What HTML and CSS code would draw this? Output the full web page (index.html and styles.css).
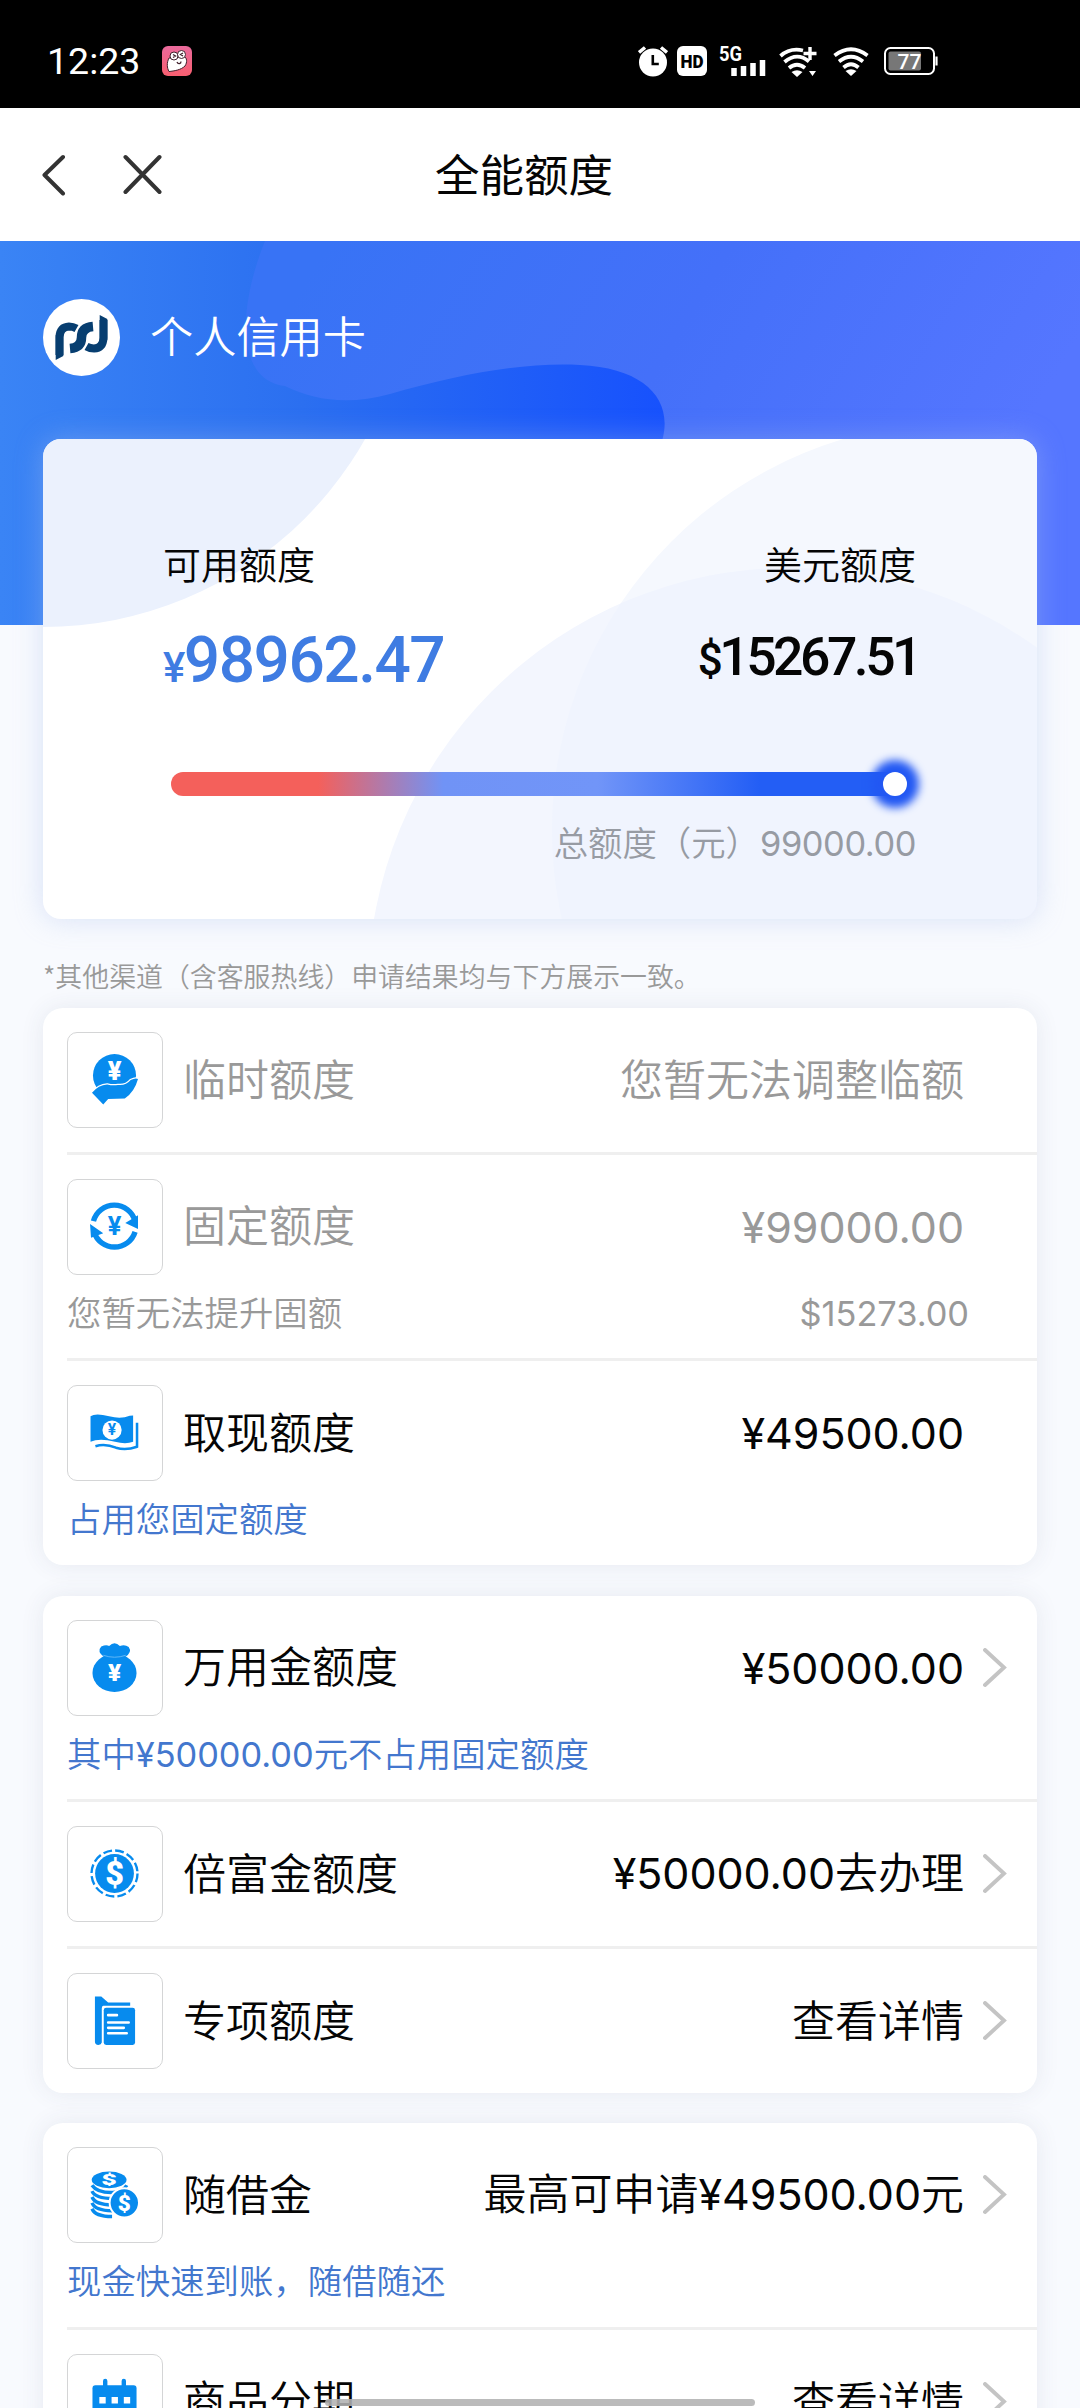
FILE: index.html
```html
<!DOCTYPE html>
<html lang="zh-CN">
<head>
<meta charset="utf-8">
<title>全能额度</title>
<link rel="stylesheet" href="styles.css">
</head>
<body>
<div class="screen">
  <div class="statusbar">
    <span class="clock">12:23</span>
    <svg class="app" width="30" height="30" viewBox="0 0 30 30"><defs><linearGradient id="pink" x1="0" y1="0" x2="0" y2="1"><stop offset="0" stop-color="#ea6a9c"/><stop offset="1" stop-color="#f85f70"/></linearGradient></defs><rect width="30" height="30" rx="6" fill="url(#pink)"/><path d="M7 12C4.500 17 5 22 7 25.500C12 25 19 24 23 20C25.500 16 25 12 22 10Z" fill="#fff" stroke="#40202c" stroke-width="1"/><circle cx="12" cy="10" r="4" fill="#fff" stroke="#40202c"/><circle cx="19.500" cy="8.500" r="4" fill="#fff" stroke="#40202c"/><path d="M11 8.500l2.500 1.500-2.500 1.500M21 7l-2.500 1.500 2.500 1.500M15 16c1 2.500 4 2 4-.5" fill="none" stroke="#40202c" stroke-width="1.300"/></svg>
    <div class="status-icons">
      <svg width="30" height="32" viewBox="0 0 30 32"><circle cx="15" cy="17.500" r="14" fill="#fff"/><path d="M1 7.500l6-5M29 7.500l-6-5" stroke="#fff" stroke-width="3.500"/><path d="M14.800 10v9h6" fill="none" stroke="#000" stroke-width="2.600"/></svg>
      <svg class="hd" width="30" height="30" viewBox="0 0 30 30"><rect width="30" height="30" rx="6" fill="#fff"/><text x="15" y="22" text-anchor="middle" textLength="23" lengthAdjust="spacingAndGlyphs" font-size="19" font-weight="900">HD</text></svg>
      <svg class="cell" width="48" height="36" viewBox="0 -4 48 36"><text x="0" y="14.500" font-size="19.500" font-weight="700" fill="#fff" textLength="23" lengthAdjust="spacingAndGlyphs">5G</text><path d="M15 30v-8M24.500 30v-10M34 30v-13M43.500 30v-16" stroke="#fff" stroke-width="5.500"/></svg>
      <svg class="wifi-plus" width="38" height="31" viewBox="0 0 38 31"><g fill="none" stroke="#fff" stroke-width="3.800"><path d="M1.500 10Q11 1.500 24 4.500M5.500 16Q18 5.500 30 15.500M10 22Q18 15.500 26 22"/><path d="M31 1v13M24.500 7.500h13" stroke-width="3.400"/></g><path d="M12.500 26q5.500-3.500 11 0l-5.500 5zM30 25h7l-3.500 5z" fill="#fff"/></svg>
      <svg class="wifi" width="36" height="30" viewBox="0 0 36 30"><path d="M1.500 9.500Q18-3 34.500 9.500M6 15.500Q18 6 30 15.500M10.500 21.500Q18 15 25.500 21.500" fill="none" stroke="#fff" stroke-width="3.800"/><path d="M12.500 25q5.500-3.500 11 0l-5.500 5z" fill="#fff"/></svg>
      <svg class="battery" width="54" height="28" viewBox="0 0 54 28"><rect x="1" y="1" width="49" height="26" rx="5.500" fill="none" stroke="#fff" stroke-width="2"/><rect x="4.500" y="4.500" width="32.500" height="19" rx="2" fill="#777"/><path d="M52.500 9.500v9" stroke="#fff" stroke-width="2.200"/><text x="25.500" y="22" font-size="21" font-weight="500" fill="#fff" text-anchor="middle">77</text></svg>
    </div>
  </div>
  <header class="navbar">
    <svg width="26" height="42" viewBox="0 0 26 42"><path d="M21 3L2.500 21 21 39.500" fill="none" stroke="#333" stroke-width="4" stroke-linecap="round" stroke-linejoin="round"/></svg>
    <svg class="close" width="40" height="42" viewBox="0 0 40 42"><path d="M2.500 3l34 35M36.500 3L2.500 38" fill="none" stroke="#333" stroke-width="4" stroke-linecap="round"/></svg>
    <h1>全能额度</h1>
  </header>
  <main>
    <section class="hero">
      <svg class="hero-art" viewBox="0 0 1080 384" width="1080" height="384"><defs>
        <linearGradient id="base" x1="0" y1="0" x2="1" y2="0"><stop offset="0" stop-color="#3a84f5"/><stop offset=".28" stop-color="#2b6ff0"/><stop offset=".62" stop-color="#1751fd"/></linearGradient>
        <linearGradient id="veil" x1=".1" y1="0" x2="1" y2=".25"><stop offset="0" stop-color="#3873f5"/><stop offset=".5" stop-color="#4470f9"/><stop offset="1" stop-color="#5576ff"/></linearGradient></defs>
        <rect width="1080" height="384" fill="url(#base)"/>
        <path d="M265 0C236 72 238 140 285 145C315 160 350 164 390 153C460 133 525 121 580 124C645 127 674 159 662 200L640 384H1080V0Z" fill="url(#veil)"/>
      </svg>
      <div class="owner">
        <svg width="77" height="77" viewBox="0 0 77 77"><circle cx="38.500" cy="38.500" r="38.500" fill="#fff"/><g fill="none" stroke="#073e70"><path d="M16.500 56V38Q17 28 26 27.500Q30 27.500 33.500 29.500" stroke-width="8"/><path d="M60.500 21V39Q60 49 51 49.500Q47 49.500 43.500 47.500" stroke-width="8"/><path d="M50 27.500Q38.500 28.500 38.500 38.500Q38.500 48.500 27 49.500" stroke-width="9.500"/></g><path d="M12.700 36v25l7.600-4V36zM64.300 41V20l-7.600-4v25z" fill="#073e70"/></svg>
        <span>个人信用卡</span>
      </div>
      <div class="quota-card">
        <svg class="quota-art" viewBox="43 439 994 480" width="994" height="480"><defs><clipPath id="overlap"><circle cx="790" cy="990" r="422"/></clipPath></defs><circle cx="43" cy="257" r="370" fill="#ebf1fd"/><circle cx="960" cy="830" r="408" fill="#f5f8fe"/><circle cx="790" cy="990" r="422" fill="#f3f6fe"/><circle cx="960" cy="830" r="408" fill="#f0f4fe" clip-path="url(#overlap)"/></svg>
        <div class="quota-row">
          <div><p class="label">可用额度</p><p class="cny"><small>¥</small>98962.47</p></div>
          <div class="right"><p class="label">美元额度</p><p class="usd"><small>$</small>15267.51</p></div>
        </div>
        <div class="meter"><i></i></div>
        <p class="total">总额度（元）<span class="n">99000.00</span></p>
      </div>
    </section>
    <p class="notice">*其他渠道（含客服热线）申请结果均与下方展示一致。</p>
    <section class="list">
      <div class="row muted">
        <div class="line"><svg class="icon" viewBox="0 0 96 96"><circle cx="47.500" cy="43.500" r="22"/><path class="cut" d="M24.500 61Q31 53 40 52.500Q46 54 51 53Q59 54 64 48Q69 45.500 71.500 47Q68 60 58 67L41 67.500 36 73Z"/><text x="47.500" y="48" font-size="26">¥</text></svg><span class="name">临时额度</span><span class="value">您暂无法调整临额</span></div>
      </div>
      <div class="row muted sub">
        <div class="line"><svg class="icon" viewBox="0 0 96 96"><g class="ring"><path d="M26 42A22 22 0 0 1 68.500 42"/><path d="M68.500 53A22 22 0 0 1 26.500 53"/></g><path d="M71.500 36V50L58.500 44ZM22.500 45L36 54.500 23.500 59Z"/><text class="solid" x="47.500" y="56" font-size="26">¥</text></svg><span class="name">固定额度</span><span class="value n">¥99000.00</span></div>
        <div class="hint"><span>您暂无法提升固额</span><span class="n usd-limit">$15273.00</span></div>
      </div>
      <div class="row sub last">
        <div class="line"><svg class="icon" viewBox="0 0 96 96"><path d="M23 31Q28 27 42 31Q54 34 63 30.500L66.500 30V57Q59 60 48 57Q32 53 23 57Z"/><path class="thin" d="M28 61.500Q38 58.500 49 63Q59 66 70.500 62V37.500"/><circle class="hole" cx="45" cy="45" r="9.800"/><text class="solid" x="45" y="50.500" font-size="16">¥</text></svg><span class="name">取现额度</span><span class="value n">¥49500.00</span></div>
        <div class="hint blue"><span>占用您固定额度</span></div>
      </div>
    </section>
    <section class="list">
      <div class="row sub">
        <div class="line"><svg class="icon" viewBox="0 0 96 96"><ellipse cx="47.500" cy="53" rx="22.500" ry="19.500"/><path d="M37 37Q29 31 34 26Q39 24 42 25.500Q47.500 20 53 25.500Q58 23.500 62 26.500Q66 32 58 37Z"/><path class="seam" d="M36 35Q47.500 39 59 35"/><text x="47.500" y="61" font-size="25">¥</text></svg><span class="name">万用金额度</span><span class="value n">¥50000.00</span><svg class="go" viewBox="0 0 24 40"><path d="M2 2l19 17.500L2 37"/></svg></div>
        <div class="hint blue"><span>其中<span class="n">¥50000.00</span>元不占用固定额度</span></div>
      </div>
      <div class="row">
        <div class="line"><svg class="icon" viewBox="0 0 96 96"><circle cx="47.500" cy="47.500" r="19.800"/><circle class="dash" cx="47.500" cy="47.500" r="23.500"/><text x="47.500" y="59" font-size="33">$</text></svg><span class="name">倍富金额度</span><span class="value"><span class="n">¥50000.00</span>去办理</span><svg class="go" viewBox="0 0 24 40"><path d="M2 2l19 17.500L2 37"/></svg></div>
      </div>
      <div class="row last">
        <div class="line"><svg class="icon" viewBox="0 0 96 96"><path d="M27.500 23H34L41 29H63.500V32.500H36Q34.500 33 34.500 35V70Q34 72.500 31 72.500Q27.500 72.500 27.500 69Z"/><rect x="36.500" y="34.500" width="32" height="38" rx="2.500"/><path class="text-lines" d="M41 42h9M41 49.500h21M41 55h16M41 60.500h19"/></svg><span class="name">专项额度</span><span class="value">查看详情</span><svg class="go" viewBox="0 0 24 40"><path d="M2 2l19 17.500L2 37"/></svg></div>
      </div>
    </section>
    <section class="list">
      <div class="row sub">
        <div class="line"><svg class="icon" viewBox="0 0 96 96"><g class="discs"><path d="M24.500 62Q28 70 45 70M24.500 56Q28 64 45 64M24.500 50Q28 58 45 58M24.500 44Q28 52 48 51.500M24.500 38Q30 46 46 45.500Q57 44 60 38"/></g><ellipse cx="42" cy="32.500" rx="17.800" ry="8.500"/><circle class="coin" cx="57.500" cy="56" r="15"/><text x="42" y="38" font-size="15" textLength="16" lengthAdjust="spacingAndGlyphs">$</text><text x="57.500" y="64" font-size="23">$</text></svg><span class="name">随借金</span><span class="value">最高可申请<span class="n">¥49500.00</span>元</span><svg class="go" viewBox="0 0 24 40"><path d="M2 2l19 17.500L2 37"/></svg></div>
        <div class="hint blue"><span>现金快速到账，随借随还</span></div>
      </div>
      <div class="row">
        <div class="line"><svg class="icon" viewBox="0 0 96 96"><rect x="25" y="31" width="45" height="42" rx="3"/><path class="hooks" d="M38 26.500v7M57 26.500v7"/><path class="hole" d="M32 43h6.500v6.500H32zM44.500 43H51v6.500h-6.500zM57 43h6.500v6.500H57zM32 56h6.500v6.500H32zM44.500 56H51v6.500h-6.500z"/></svg><span class="name">商品分期</span><span class="value">查看详情</span><svg class="go" viewBox="0 0 24 40"><path d="M2 2l19 17.500L2 37"/></svg></div>
      </div>
    </section>
  </main>
  <div class="home-bar"></div>
</div>
</body>
</html>
```
FILE: styles.css
```css
* { box-sizing: border-box; margin: 0; padding: 0; }
body { background: #f8fafe; font-family: "Noto Sans CJK SC", sans-serif; font-weight: 350; color: #050505; }
svg { display: block; flex: none; }
.screen { position: relative; width: 1080px; height: 2408px; overflow: hidden; background: #f8fafe; }
.n { font-family: Inter, "Noto Sans CJK SC", sans-serif; letter-spacing: -0.001em; font-weight: 400; }

.statusbar { height: 108px; background: #000; color: #fff; display: flex; align-items: center; padding: 14px 0 0 47px; font-family: Roboto, sans-serif; }
.clock { width: 115px; font-size: 37.500px; font-weight: 400; line-height: 44px; }
.status-icons { display: flex; align-items: center; margin-left: 446px; }
.hd { margin-left: 9px; }
.cell { margin: -3px 0 0 12px; }
.wifi-plus { margin-left: 12px; }
.wifi { margin-left: 16px; }
.battery { margin-left: 15px; }

.navbar { height: 133px; background: #fff; display: flex; align-items: center; padding-left: 42px; }
.close { margin-left: 55px; }
.navbar h1 { margin-left: 272px; padding-bottom: 4px; font-size: 44.500px; line-height: 60px; font-weight: 400; }

.hero { position: relative; height: 678px; padding: 58px 43px 0; }
.hero-art { position: absolute; left: 0; top: 0; }
.owner { position: relative; display: flex; align-items: center; gap: 30px; height: 77px; color: #fff; font-size: 43.200px; line-height: 60px; }
.owner span { padding-bottom: 7px; }
.quota-card { position: relative; margin-top: 63px; width: 994px; height: 480px; border-radius: 18px; overflow: hidden; background: #fff; padding: 98px 121px 0 120px; }
.hero::after { content: ""; position: absolute; left: 43px; top: 198px; width: 994px; height: 480px; border-radius: 18px; box-shadow: 0 0 28px rgba(170, 190, 235, .42); pointer-events: none; }
.quota-art { position: absolute; left: 0; top: 0; }
.quota-row { position: relative; display: flex; justify-content: space-between; height: 235px; }
.right { text-align: right; }
.label { font-size: 38px; line-height: 52px; }
.cny, .usd { font-family: Roboto, sans-serif; font-weight: 500; white-space: nowrap; }
.cny { color: #3f7ce2; font-size: 64px; line-height: 80px; margin-top: 32px; letter-spacing: -1.500px; }
.cny small { font-size: 42px; }
.usd { color: #050505; font-size: 53.500px; line-height: 80px; margin-top: 28px; letter-spacing: -3.500px; margin-right: -3px; }
.usd small { font-size: 44px; }
.meter { position: relative; width: 736px; height: 24px; margin-left: 8px; border-radius: 12px; background: linear-gradient(90deg, #f4605b 0%, #f4605b 20%, #7093f6 37%, #7195f8 58%, #235ef5 80%, #235ef5 100%); }
.meter i { position: absolute; right: 0; top: 0; width: 24px; height: 24px; border-radius: 50%; background: #fff; box-shadow: 0 0 8px 12px #2258f3; }
.total { position: relative; margin-top: 22px; text-align: right; font-size: 34.400px; line-height: 46px; color: #979ba3; }
.total .n { letter-spacing: -0.012em; }

.notice { height: 89.300px; padding: 40px 0 0 43px; font-size: 26.900px; line-height: 34px; color: #999; }
.list { width: 994px; margin: 0 43px 30.500px; background: #fff; border-radius: 20px; box-shadow: 0 0 24px rgba(60, 70, 100, .09); }
.row { height: 146.700px; padding-top: 24px; margin-left: 24px; border-bottom: 3px solid #efefef; }
.row.sub { height: 206.500px; }
.row.last { height: 143.800px; border-bottom: 0; }
.row.sub.last { height: 204px; }
.line { display: flex; align-items: center; height: 96px; font-size: 43px; line-height: 60px; }
.icon { width: 96px; height: 96px; border: 1px solid #d4d5d6; border-radius: 10px; fill: #078bee; }
.name { margin-left: 20px; padding-bottom: 7px; }
.value { margin-left: auto; margin-right: 73px; padding-bottom: 6px; white-space: nowrap; }
.value.n { padding-bottom: 0; }
.value:has(+ .go) { margin-right: 19px; }
.go { width: 24px; height: 40px; margin-right: 30px; fill: none; stroke: #c4c4c4; stroke-width: 3.900; stroke-linecap: round; }
.hint { display: flex; justify-content: space-between; padding-right: 68px; margin-top: 12px; font-size: 34.400px; line-height: 48px; }
.usd-limit { padding-top: 3px; }
.blue { color: #4377ce; }
.muted { color: #999; }
.icon text { font-family: Roboto, sans-serif; font-weight: 900; fill: #fff; text-anchor: middle; }
.icon text.solid { fill: #078bee; font-weight: 700; }
.cut { stroke: #fff; stroke-width: 2.500; paint-order: stroke; }
.ring { fill: none; stroke: #078bee; stroke-width: 5.500; }
.thin { fill: none; stroke: #078bee; stroke-width: 2.600; }
.hole { fill: #fff; }
.seam { fill: none; stroke: #62b6f6; stroke-width: 1; }
.dash { fill: none; stroke: #078bee; stroke-width: 2.400; stroke-dasharray: 9 3.300; }
.text-lines { fill: none; stroke: #fff; stroke-width: 2.600; stroke-linecap: round; }
.discs { fill: none; stroke: #078bee; stroke-width: 3.500; }
.coin { stroke: #fff; stroke-width: 2; }
.hooks { fill: none; stroke: #078bee; stroke-width: 4.500; stroke-linecap: round; }
.home-bar { position: absolute; left: 325px; top: 2399px; width: 430px; height: 7px; border-radius: 4px; background: rgba(178, 178, 178, .88); }
```
